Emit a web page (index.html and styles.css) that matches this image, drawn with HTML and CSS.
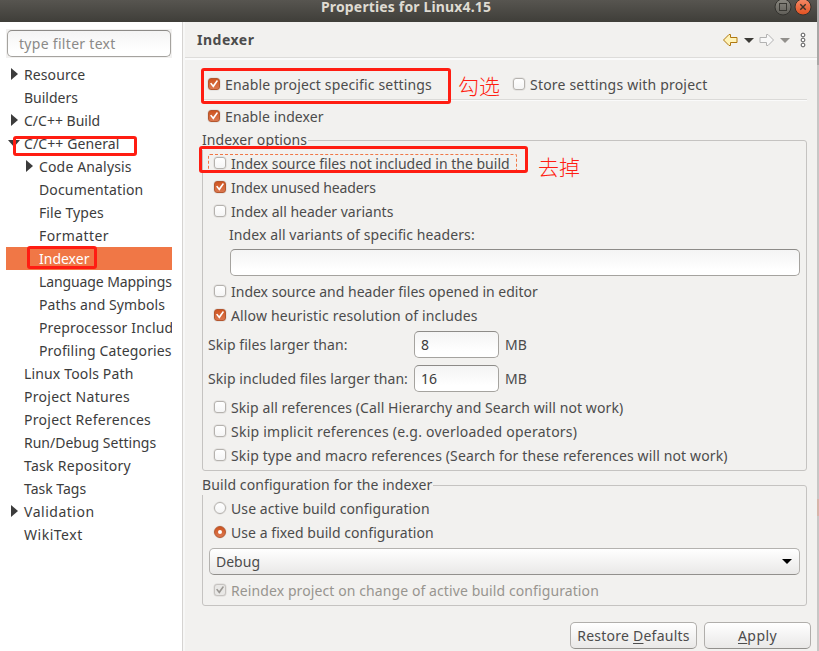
FILE: index.html
```
<!DOCTYPE html>
<html lang="en">
<head>
<meta charset="utf-8">
<title>Properties for Linux4.15</title>
<link rel="stylesheet" href="styles.css">
</head>
<body>
<div class="dialog">
  <header class="titlebar">
    <span class="title">Properties for Linux4.15</span>
    <svg class="controls" width="40" height="22" viewBox="0 0 40 22">
      <defs>
        <linearGradient id="gray" x1="0" y1="0" x2="0" y2="1"><stop offset="0" stop-color="#8b8982"/><stop offset="1" stop-color="#5f5d57"/></linearGradient>
        <linearGradient id="orange" x1="0" y1="0" x2="0" y2="1"><stop offset="0" stop-color="#f58a67"/><stop offset="1" stop-color="#e1501f"/></linearGradient>
      </defs>
      <circle cx="10" cy="7" r="8" fill="url(#gray)" stroke="#33322e"/>
      <rect x="6.500" y="3.500" width="7" height="7" fill="none" stroke="#393833"/>
      <circle cx="30" cy="7" r="8" fill="url(#orange)" stroke="#33322e"/>
      <path d="M27.300 4.300l5.400 5.400M32.700 4.300l-5.400 5.400" stroke="#393128" stroke-width="1.400"/>
    </svg>
  </header>
  <div class="body">
    <aside class="sidebar">
      <div class="filter"><div class="field">type filter text</div></div>
      <ul class="tree">
        <li><i class="closed"></i><span class="t1">Resource</span></li>
        <li><span>Builders</span></li>
        <li><i class="closed"></i><span>C/C++ Build</span></li>
        <li><i class="open"></i><span class="t1">C/C++ General</span></li>
        <li class="child"><i class="closed"></i><span class="t15">Code Analysis</span></li>
        <li class="child"><span class="t15">Documentation</span></li>
        <li class="child"><span class="t1">File Types</span></li>
        <li class="child"><span class="t4">Formatter</span></li>
        <li class="child selected"><span>Indexer</span></li>
        <li class="child"><span class="n1">Language Mappings</span></li>
        <li class="child"><span class="t1">Paths and Symbols</span></li>
        <li class="child"><span class="t15">Preprocessor Includ</span></li>
        <li class="child"><span class="t15">Profiling Categories</span></li>
        <li><span class="t15">Linux Tools Path</span></li>
        <li><span class="t3">Project Natures</span></li>
        <li><span class="t3">Project References</span></li>
        <li><span>Run/Debug Settings</span></li>
        <li><span class="t3">Task Repository</span></li>
        <li><span>Task Tags</span></li>
        <li><i class="closed"></i><span class="t5">Validation</span></li>
        <li><span class="t5">WikiText</span></li>
      </ul>
    </aside>
    <main class="page">
      <div class="heading">
        <h1>Indexer</h1>
        <svg class="nav" width="86" height="18" viewBox="0 0 86 18">
          <path d="M1.500 9L7 3.500h1.500V6.500h6.500v5h-6.500v3H7z" fill="#fff3b8" stroke="#b07810" stroke-linejoin="round"/>
          <path d="M22 7h10l-5 5z" fill="#3c3b37"/>
          <path d="M51.500 9L46 3.500h-1.500V6.500h-6.500v5h6.500v3H46z" fill="#f8f8f8" stroke="#b2b2b2" stroke-linejoin="round"/>
          <path d="M58 7h10l-5 5z" fill="#92908c"/>
          <g fill="#fff" stroke="#555"><circle cx="81" cy="4" r="1.900"/><circle cx="81" cy="9" r="1.900"/><circle cx="81" cy="14" r="1.900"/></g>
        </svg>
      </div>
      <div class="content">
        <div class="scope">
          <label class="opt project"><b class="box on"></b><span class="t15">Enable project specific settings</span></label>
          <label class="opt"><b class="box"></b><span class="t2">Store settings with project</span></label>
        </div>
        <label class="opt enable"><b class="box on"></b><span class="t1">Enable indexer</span></label>
        <section class="group options">
          <h2>Indexer options</h2>
          <label class="opt focus"><b class="box"></b><span>Index source files not included in the build</span></label>
          <label class="opt"><b class="box on"></b><span class="n1">Index unused headers</span></label>
          <label class="opt"><b class="box"></b><span>Index all header variants</span></label>
          <div class="sub"><span class="t1">Index all variants of specific headers:</span></div>
          <div class="field wide"></div>
          <label class="opt"><b class="box"></b><span>Index source and header files opened in editor</span></label>
          <label class="opt"><b class="box on"></b><span class="t15">Allow heuristic resolution of includes</span></label>
          <div class="limit"><span class="name t05">Skip files larger than:</span><div class="field">8</div><span>MB</span></div>
          <div class="limit"><span class="name t05">Skip included files larger than:</span><div class="field">16</div><span>MB</span></div>
          <label class="opt"><b class="box"></b><span class="t1">Skip all references (Call Hierarchy and Search will not work)</span></label>
          <label class="opt"><b class="box"></b><span class="t24">Skip implicit references (e.g. overloaded operators)</span></label>
          <label class="opt"><b class="box"></b><span class="t14">Skip type and macro references (Search for these references will not work)</span></label>
        </section>
        <section class="group build">
          <h2>Build configuration for the indexer</h2>
          <label class="opt"><b class="box radio"></b><span class="t1">Use active build configuration</span></label>
          <label class="opt"><b class="box radio on"></b><span class="t05">Use a fixed build configuration</span></label>
          <div class="combo"><span>Debug</span><i></i></div>
          <label class="opt disabled"><b class="box on"></b><span class="t1">Reindex project on change of active build configuration</span></label>
        </section>
        <div class="buttons">
          <button class="restore"><span class="t24">Restore <u>D</u>efaults</span></button>
          <button class="apply"><span class="t4"><u>A</u>pply</span></button>
        </div>
      </div>
    </main>
  </div>
</div>
<div class="backdrop"></div>
<div class="mark m-general"></div>
<div class="mark m-indexer"></div>
<div class="mark m-project"></div>
<div class="mark m-source"></div>
<div class="note n-check" lang="zh">勾选</div>
<div class="note n-remove" lang="zh">去掉</div>
</body>
</html>
```
FILE: styles.css
```
* { box-sizing: border-box; }
body {
  margin: 0; width: 819px; height: 651px; overflow: hidden; position: relative;
  display: flex; background: #f2f1ef; color: #4c4c4c;
  font: 14px/20px "Noto Sans", "Open Sans", sans-serif; white-space: nowrap;
}
.dialog { width: 817px; height: 651px; display: flex; flex-direction: column; }
.backdrop { width: 2px; background: linear-gradient(#a9a7a6 65px, #c8c6c5 65px 499px, #d5b5aa 499px 516px, #c8c6c5 516px); }

/* letter tracking */
.n1 { letter-spacing: -.1px; }
.t05 { letter-spacing: .05px; }
.t1 { letter-spacing: .095px; }
.t14 { letter-spacing: .137px; }
.t15 { letter-spacing: .15px; }
.t2 { letter-spacing: .2px; }
.t24 { letter-spacing: .24px; }
.t3 { letter-spacing: .28px; }
.t4 { letter-spacing: .42px; }
.t5 { letter-spacing: .52px; }

.titlebar {
  height: 22px; flex: none; display: flex; justify-content: flex-end; position: relative;
  background: linear-gradient(#575550, #3f3e39);
}
.title { position: absolute; left: 321px; top: 0; color: #dfdbd2; font-weight: 700; font-size: 14px; line-height: 14px; letter-spacing: .15px; }
.controls { margin-right: 4px; }
.body { flex: 1; display: flex; min-height: 0; }

.sidebar { width: 185px; flex: none; background: #fff; box-shadow: inset -2px 0 #f7f7f6, inset -3px 0 #d5d3d1; padding: 7px 13px 0 6px; color: #3c3c3c; }
.filter { height: 29px; background: #f2f1f0; padding: 1px; }
.field {
  height: 27px; border: 1px solid #a5a39f; border-top-color: #8d8b88; border-radius: 5px;
  background: linear-gradient(#f4f4f4, #fff 80%); padding: 3px 6px; color: #3c3c3c;
}
.filter .field { padding-left: 11px; color: #8b8a88; letter-spacing: .3px; }
.tree { list-style: none; margin: 5px 0 0; padding: 0; width: 166px; overflow: hidden; }
.tree li { height: 23px; line-height: 23px; padding-left: 18px; position: relative; }
.tree .child { padding-left: 33px; }
.tree .selected { background: #f07746; color: #fff; }
.tree i { position: absolute; left: 5px; top: 5px; border: solid transparent; border-width: 6px 0 6px 7px; border-left-color: #3c3c3c; }
.tree .child i { left: 20px; }
.tree i.open { left: 2px; top: 8px; border-width: 7px 6px 0; border-color: #3c3c3c transparent transparent; }

.page { flex: 1; min-width: 0; display: flex; flex-direction: column; }
.heading { height: 38px; flex: none; display: flex; align-items: center; justify-content: space-between; padding: 0 9px 1px 12px; border-bottom: 2px solid #fafafa; box-shadow: inset 0 -1px #dddcda; }
h1 { margin: 0; font-size: 14px; line-height: 20px; letter-spacing: .5px; }
.content { padding: 12px 6px 0 17px; display: flex; flex-direction: column; }
.opt { height: 24px; display: flex; align-items: center; gap: 5px; }
.box {
  width: 12px; height: 12px; flex: none; border: 1px solid #b5b2ae; border-radius: 3px;
  background: linear-gradient(#fff, #f5f5f5); position: relative; top: -1px; box-shadow: 0 0 0 .5px #dad8d6;
}
.box.on { background: linear-gradient(#ce5420, #dc7850); border-color: #b4572f; }
.box.on::after {
  content: ""; position: absolute; left: 1px; top: 1px; width: 8px; height: 8px; background: #fff;
  clip-path: polygon(0 45%, 17% 33%, 39% 62%, 86% 0, 100% 12%, 42% 98%);
}
.box.radio { border-radius: 50%; }
.box.radio.on::after { left: 3px; top: 3px; width: 4px; height: 4px; border-radius: 50%; clip-path: none; }
.disabled { color: #98958f; }
.disabled .box.on { background: #e9e8e6; border-color: #c6c3c0; }
.disabled .box.on::after { background: #9a9793; }
.scope { height: 28px; width: 605px; display: flex; padding: 1px 0 0 6px; border-bottom: 1px solid #dbdad8; box-shadow: 0 1px #fafafa; }
.project { width: 305px; }
.enable { margin: 5px 0 0 6px; }

.group { width: 605px; position: relative; border: 1px solid #c5c3c1; border-radius: 3px; padding: 0 6px; }
.group h2 { position: absolute; left: -1px; top: -11px; margin: 0; font-size: 14px; font-weight: 400; line-height: 20px; letter-spacing: .1px; background: #f2f1ef; padding-right: 1px; }
.group .opt { padding-left: 6px; margin-left: -1px; }
.options { height: 331px; margin-top: 11px; padding-top: 11px; }
.sub { height: 23px; line-height: 21px; padding-left: 20px; }
.wide { margin: 2px 0 4px 21px; width: 570px; }
.focus { position: relative; }
.focus::before { content: ""; position: absolute; left: 0; top: 2px; width: 307px; height: 17px; border: 1px dashed #f07746; border-bottom: 0; border-radius: 2px 2px 0 0; }
.limit { height: 34px; display: flex; align-items: center; padding-left: 0; margin-left: -1px; }
.limit .name { width: 206px; }
.limit .field { width: 85px; margin: -2px 6px 0 0; }
.build { height: 121px; margin-top: 14px; padding-top: 11px; }
.combo {
  height: 27px; width: 591px; margin: 3px 0 4px 0; border: 1px solid #b4b2af; border-bottom-color: #92908d; border-radius: 5px;
  background: linear-gradient(#fff, #e9e8e7); display: flex; align-items: center; justify-content: space-between; padding: 0 7px 0 6px;
}
.combo i { border: solid transparent; border-width: 5px 5px 0; border-top-color: #000; }
.buttons { display: flex; justify-content: flex-end; gap: 7px; margin-top: 16px; }
button { height: 27px; padding: 0; border: 1px solid #b0aeab; border-bottom-color: #92908d; border-radius: 5px; background: linear-gradient(#fff, #e9e8e7); font: inherit; color: #4c4c4c; }
.restore { width: 127px; }
.apply { width: 107px; }
u { text-underline-offset: 2px; }

.mark { position: absolute; border: 3px solid #ff1d12; border-radius: 3px; }
.m-general { left: 13px; top: 136px; width: 124px; height: 20px; }
.m-indexer { left: 27px; top: 246px; width: 70px; height: 23px; }
.m-project { left: 201px; top: 68px; width: 250px; height: 36px; }
.m-source { left: 199px; top: 146px; width: 329px; height: 27px; }
.note { position: absolute; color: #ff1d12; font: 300 21px/24px "Noto Sans CJK SC", sans-serif; }
.n-check { left: 458px; top: 73px; }
.n-remove { left: 538px; top: 154px; }
```
